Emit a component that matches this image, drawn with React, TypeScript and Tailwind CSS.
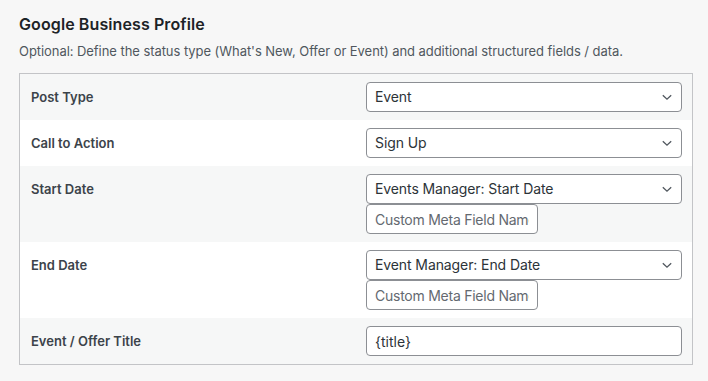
import { ChangeEvent, useState } from 'react';

const font = { fontFamily: 'Inter, "Noto Sans", sans-serif' };

function Chevron() {
  return (
    <svg
      width="12"
      height="12"
      viewBox="0 0 12 12"
      className="pointer-events-none absolute right-[9px] top-1/2 -translate-y-1/2"
    >
      <path d="M1.8 4.2 6 8.2l4.2-4" fill="none" stroke="#50575e" strokeWidth="1.3" />
    </svg>
  );
}

function Select({ options, value, onChange }: { options: string[]; value: string; onChange: (v: string) => void }) {
  return (
    <div className="relative w-full">
      <select
        value={value}
        onChange={(e: ChangeEvent<HTMLSelectElement>) => onChange(e.target.value)}
        className="block h-[30px] w-full appearance-none rounded-[4px] border border-[#8c8f94] bg-white pl-[8px] pr-[24px] text-[14px] leading-[28px] tracking-[-0.1px] text-[#2c3338] outline-none"
      >
        {options.map((o) => (
          <option key={o}>{o}</option>
        ))}
      </select>
      <Chevron />
    </div>
  );
}

function MetaInput() {
  return (
    <input
      type="text"
      placeholder="Custom Meta Field Name"
      className="block h-[30px] w-[172px] rounded-[4px] border border-[#8c8f94] bg-white px-[8px] text-[14px] tracking-[-0.25px] text-[#2c3338] outline-none placeholder:text-[#646970]"
    />
  );
}

function Row({ label, gray, children }: { label: string; gray?: boolean; children: React.ReactNode }) {
  return (
    <div className={`flex py-[8px] ${gray ? 'bg-[#f6f7f7]' : 'bg-white'}`}>
      <div className="w-[346px] shrink-0 pl-[11px] text-[13px] font-semibold leading-[30px] text-[#3c434a]">
        {label}
      </div>
      <div className="flex-1 pr-[10px]">{children}</div>
    </div>
  );
}

export default function App() {
  const [postType, setPostType] = useState('Event');
  const [cta, setCta] = useState('Sign Up');
  const [start, setStart] = useState('Events Manager: Start Date');
  const [end, setEnd] = useState('Event Manager: End Date');

  return (
    <div className="min-h-screen bg-[#f7f7f7] px-[19px] pt-[14px]" style={font}>
      <h2 className="text-[16px] font-semibold leading-[20px] tracking-[0.1px] text-[#1d2327]">Google Business Profile</h2>
      <p className="mt-[8px] text-[13px] leading-[18px] tracking-[-0.06px] text-[#50575e]">
        Optional: Define the status type (What's New, Offer or Event) and additional structured fields / data.
      </p>

      <div className="mt-[13px] w-[674px] border border-[#c3c4c7]">
        <Row label="Post Type" gray>
          <Select options={['What\'s New', 'Offer', 'Event']} value={postType} onChange={setPostType} />
        </Row>
        <Row label="Call to Action">
          <Select options={['Book', 'Order Online', 'Buy', 'Learn More', 'Sign Up', 'Call']} value={cta} onChange={setCta} />
        </Row>
        <Row label="Start Date" gray>
          <Select options={['Events Manager: Start Date', 'Custom Field']} value={start} onChange={setStart} />
          <MetaInput />
        </Row>
        <Row label="End Date">
          <Select options={['Event Manager: End Date', 'Custom Field']} value={end} onChange={setEnd} />
          <MetaInput />
        </Row>
        <Row label="Event / Offer Title" gray>
          <input
            type="text"
            defaultValue="{title}"
            className="block h-[30px] w-full rounded-[4px] border border-[#8c8f94] bg-white px-[8px] text-[14px] text-[#2c3338] outline-none"
          />
        </Row>
      </div>
    </div>
  );
}
